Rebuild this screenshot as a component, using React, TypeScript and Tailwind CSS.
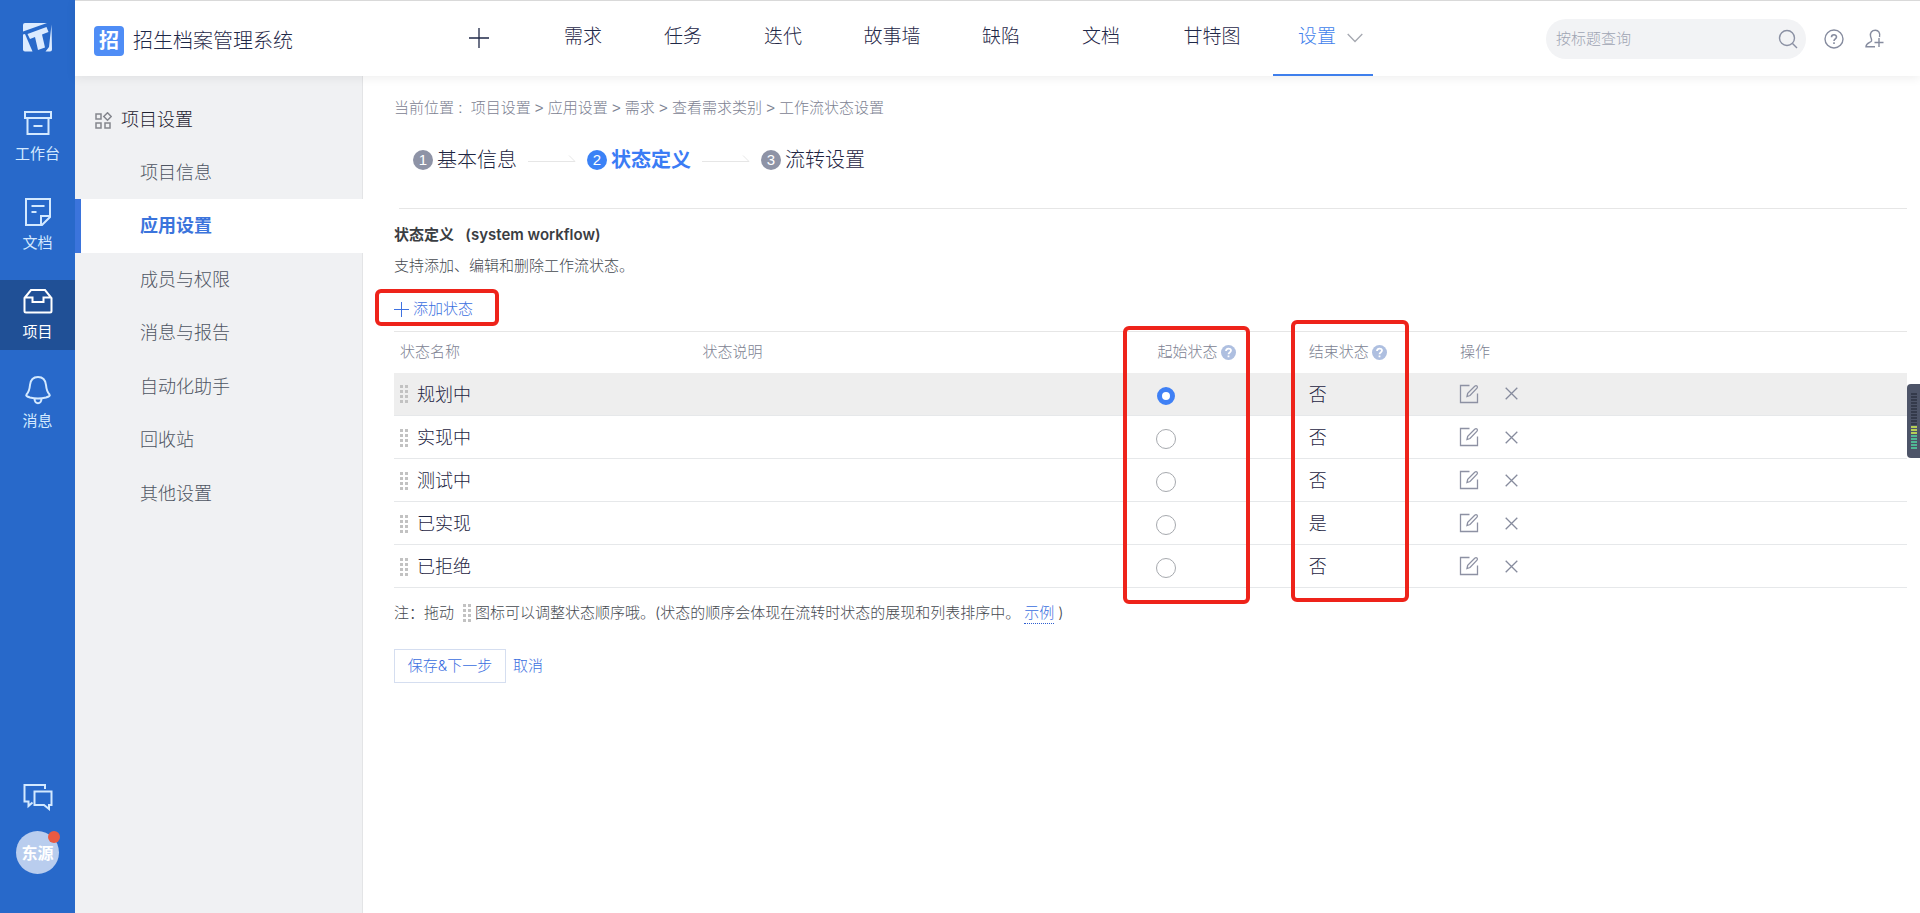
import { useState, type ReactNode } from "react";

const railStroke = {
  fill: "none",
  stroke: "currentColor",
  strokeWidth: 2,
} as const;

function LogoMark() {
  return (
    <svg width="30" height="30" viewBox="0 0 30 30" fill="#dcebff" aria-hidden="true">
      <path d="M2 0H24L0 8.500V2Q0 0 2 0Z" />
      <path d="M0 11.500L2 11L9.500 28.500H2Q0 28.500 0 26.500Z" />
      <path d="M28.500 1.500L29 26.500Q29 28.500 27 28.500H22.500L26 24Z" />
      <path d="M4.500 11L23.500 4L25.500 9L19 11.500L22 24.500L15 27L12 14L7 16Z" />
    </svg>
  );
}

function WorkbenchIcon() {
  return (
    <svg width="28" height="28" viewBox="0 0 28 28" {...railStroke} aria-hidden="true">
      <path d="M1 3H27V9H1Z M3.500 9V25H24.500V9 M9.500 17H18.500" />
    </svg>
  );
}

function DocIcon() {
  return (
    <svg width="28" height="28" viewBox="0 0 28 28" {...railStroke} aria-hidden="true">
      <path d="M2 1H26V19L18 27H2Z M26 18H17V27 M7.500 8H20.500 M7.500 14H12.500" />
    </svg>
  );
}

function ProjectIcon() {
  return (
    <svg width="30" height="28" viewBox="0 0 30 28" {...railStroke} aria-hidden="true">
      <path d="M1.500 11L8 3H22L28.500 11V24Q28.500 25.500 27 25.500H3Q1.500 25.500 1.500 24Z M1.500 10.500H9.500V15H20.500V10.500H28.500" />
    </svg>
  );
}

function BellIcon() {
  return (
    <svg width="28" height="30" viewBox="0 0 28 30" {...railStroke} aria-hidden="true">
      <path d="M14 2C9 2 6.500 5.500 6 10C5.500 15.500 4.500 17.500 2.500 19.500C1.700 20.500 2.500 21.500 6 22.500C11 23.800 17 23.800 22 22.500C25.500 21.500 26.300 20.500 25.500 19.500C23.500 17.500 22.500 15.500 22 10C21.500 5.500 19 2 14 2Z M10.500 24C11 29.500 17 29.500 17.500 24" />
    </svg>
  );
}

function ChatIcon() {
  return (
    <svg width="30" height="28" viewBox="0 0 30 28" {...railStroke} aria-hidden="true">
      <path d="M22 6V2H1.500V18.500H5.500V23L9.500 19.500 M11.500 8.500H28.500V22H26V26L21 22H11.500Z" />
    </svg>
  );
}

function GridIcon() {
  return (
    <svg width="17" height="17" viewBox="0 0 17 17" fill="none" stroke="#84868d" strokeWidth="1.500" aria-hidden="true">
      <path d="M1 2H6V7H1Z M1 11H6V16H1Z M10 11H15V16H10Z M12.500 .8L16.200 4.500L12.500 8.200L8.800 4.500Z" />
    </svg>
  );
}

function PlusIcon({ size }: { size: number }) {
  return (
    <svg width={size} height={size} viewBox="0 0 20 20" fill="none" stroke="currentColor" strokeWidth="1.300" aria-hidden="true">
      <path d="M10 0V20 M0 10H20" />
    </svg>
  );
}

function SearchIcon() {
  return (
    <svg width="20" height="20" viewBox="0 0 20 20" fill="none" stroke="#8a90a3" strokeWidth="1.400" aria-hidden="true">
      <circle cx="9" cy="9" r="7.500" />
      <path d="M14.500 14.500L19 19" />
    </svg>
  );
}

function HelpIcon() {
  return (
    <svg width="20" height="20" viewBox="0 0 20 20" fill="none" stroke="#868c9f" strokeWidth="1.400" aria-hidden="true">
      <circle cx="10" cy="10" r="9" />
      <path d="M7.500 8.200C7.500 5 12.500 5 12.500 8C12.500 9.800 10 9.800 10 12 M10 13.300V15" strokeWidth="1.600" />
    </svg>
  );
}

function AddUserIcon() {
  return (
    <svg width="19" height="20" viewBox="0 0 19 20" fill="none" stroke="#868c9f" strokeWidth="1.400" aria-hidden="true">
      <path d="M14.500 8C15.500 4 13.500 1.200 10.500 1.200C6.500 1.200 5 4 5.500 7C5.700 9 7 10 6.500 12C6 13.500 1 14 1 17.800H10 M14 9V18 M9.500 13.500H18.500" />
    </svg>
  );
}

function HintIcon() {
  return (
    <svg width="15" height="15" viewBox="0 0 15 15" aria-hidden="true">
      <circle cx="7.500" cy="7.500" r="7.500" fill="#aebfe0" />
      <path d="M5 6C5 2.800 10 2.800 10 5.600C10 7.400 7.500 7.400 7.500 9.200 M7.500 10.500V12.300" fill="none" stroke="#fff" strokeWidth="1.800" />
    </svg>
  );
}

function EditIcon() {
  return (
    <svg width="20" height="20" viewBox="0 0 20 20" fill="none" stroke="#8d91a3" strokeWidth="1.300" aria-hidden="true">
      <path d="M10.500 1.500H1.500V18.500H18.500V9.500" />
      <path d="M8 12.500L8.700 9.300L15.700 2.200C17.500 .8 19.200 2.500 18 4.200L11 11.500Z" />
    </svg>
  );
}

function CloseIcon() {
  return (
    <svg width="13" height="13" viewBox="0 0 13 13" fill="none" stroke="#868b9d" strokeWidth="1.300" aria-hidden="true">
      <path d="M.7 .7L12.300 12.300M12.300 .7L.7 12.300" />
    </svg>
  );
}

function DragDots() {
  return (
    <svg width="8" height="19" viewBox="0 0 8 19" fill="#c2c2c2" className="inline-block shrink-0" aria-hidden="true">
      <path d="M0 0H3V3H0Z M5 0H8V3H5Z M0 5H3V8H0Z M5 5H8V8H5Z M0 10H3V13H0Z M5 10H8V13H5Z M0 15H3V18H0Z M5 15H8V18H5Z" />
    </svg>
  );
}

const railItems: { label: string; icon: ReactNode; active?: boolean }[] = [
  { label: "工作台", icon: <WorkbenchIcon /> },
  { label: "文档", icon: <DocIcon /> },
  { label: "项目", icon: <ProjectIcon />, active: true },
  { label: "消息", icon: <BellIcon /> },
];

function Rail() {
  return (
    <nav className="flex w-[75px] shrink-0 flex-col items-center bg-[#2869ca] text-[#d3e9ff]">
      <a href="#home" aria-label="首页" className="mt-[23px]">
        <LogoMark />
      </a>
      <ul className="mt-[49px] flex w-full flex-col gap-[19px]">
        {railItems.map((item) => (
          <li key={item.label}>
            <a
              href="#rail"
              className={
                item.active
                  ? "flex h-[70px] flex-col items-center gap-[5px] bg-[#205096] pt-[7px] text-white"
                  : "flex h-[70px] flex-col items-center gap-[5px] pt-[7px]"
              }
            >
              <span className="flex h-7 items-center">{item.icon}</span>
              <span className="text-[15px] leading-6 font-normal">{item.label}</span>
            </a>
          </li>
        ))}
      </ul>
      <button type="button" aria-label="反馈" className="mt-auto">
        <ChatIcon />
      </button>
      <button
        type="button"
        className="relative mt-5 mb-[39px] size-[43px] rounded-full bg-[#b9cdee] text-base font-bold text-white"
      >
        <span className="whitespace-nowrap">东源</span>
        <span className="absolute top-0 -right-px size-3 rounded-full bg-[#ea5a42]" />
      </button>
    </nav>
  );
}

const navItems = [
  { label: "需求", width: "w-[100px]" },
  { label: "任务", width: "w-[100px]" },
  { label: "迭代", width: "w-[100px]" },
  { label: "故事墙", width: "w-[118px]" },
  { label: "缺陷", width: "w-[100px]" },
  { label: "文档", width: "w-[100px]" },
  { label: "甘特图", width: "w-[122px]" },
];

function Header() {
  return (
    <header className="relative z-10 flex h-[76px] border-t border-[#d9d9d9] bg-white shadow-[0_2px_10px_rgba(0,0,0,0.07)]">
      <div className="flex w-[354px] shrink-0 items-center gap-[9px] pt-[5px] pl-[19px]">
        <span className="flex size-[30px] items-center justify-center rounded bg-[#4f8df6] text-xl font-bold text-white">
          招
        </span>
        <span className="text-xl text-[#1f2848]">招生档案管理系统</span>
      </div>
      <nav className="flex text-[19px] text-[#1f2848]">
        <button type="button" aria-label="新建" className="flex w-[104px] items-center pb-[2px] pl-10">
          <PlusIcon size={20} />
        </button>
        {navItems.map((item) => (
          <a key={item.label} href="#nav" className={`flex items-center justify-center pb-[2px] ${item.width}`}>
            {item.label}
          </a>
        ))}
        <a
          href="#settings"
          className="flex w-[100px] items-center gap-[11px] border-b-2 border-[#3f7fec] pl-[25px] text-[#3f7fec]"
        >
          设置
          <svg width="16" height="10" viewBox="0 0 16 10" fill="none" stroke="#a5a8b0" strokeWidth="1.300" aria-hidden="true">
            <path d="M.7 1L8 8.500L15.300 1" />
          </svg>
        </a>
      </nav>
      <div className="ml-auto flex items-center pt-px pr-9">
        <label className="flex h-10 w-[260px] items-center rounded-full bg-[#f2f3f5] pr-2 pl-[10px]">
          <input
            type="text"
            aria-label="按标题查询"
            placeholder="按标题查询"
            className="min-w-0 flex-1 bg-transparent text-[15px] outline-none placeholder:text-[#9ea4b3]"
          />
          <SearchIcon />
        </label>
        <button type="button" aria-label="帮助" className="ml-[18px]">
          <HelpIcon />
        </button>
        <button type="button" aria-label="邀请成员" className="ml-[21px]">
          <AddUserIcon />
        </button>
      </div>
    </header>
  );
}

const menu = ["项目信息", "应用设置", "成员与权限", "消息与报告", "自动化助手", "回收站", "其他设置"];

function SideMenu() {
  return (
    <aside className="w-[288px] shrink-0 border-r border-[#e3e4e6] bg-[#f0f1f3] pt-[30px]">
      <h2 className="flex h-7 items-center gap-[9px] pl-5 text-lg text-[#1d2130]">
        <GridIcon />
        项目设置
      </h2>
      <ul className="mt-3 text-lg text-[#4e5562]">
        {menu.map((label) => (
          <li key={label} className="odd:h-[53px] even:h-[54px]">
            <a
              href="#menu"
              className={
                label === "应用设置"
                  ? "-mr-px flex h-full items-center border-l-[6px] border-[#3b74dc] bg-white pl-[59px] font-bold text-[#3b74dc]"
                  : "flex h-full items-center pl-[65px]"
              }
            >
              {label}
            </a>
          </li>
        ))}
      </ul>
    </aside>
  );
}

function Step({ index, label, active }: { index: number; label: string; active?: boolean }) {
  return (
    <li className="flex items-center gap-1">
      <span
        className={
          active
            ? "flex size-5 items-center justify-center rounded-full bg-[#3b82f6] font-['Liberation_Sans'] text-[15px] text-white"
            : "flex size-5 items-center justify-center rounded-full bg-[#8e93a6] font-['Liberation_Sans'] text-[15px] text-white"
        }
      >
        {index}
      </span>
      <span className={active ? "text-xl font-bold text-[#3b7cf5]" : "text-xl text-[#1e2542]"}>{label}</span>
    </li>
  );
}

function StepArrow() {
  return (
    <li aria-hidden="true">
      <svg width="48" height="10" viewBox="0 0 48 10" fill="none" stroke="#e6e6e6">
        <path d="M0 6.500H47L41 .5" />
      </svg>
    </li>
  );
}

const states = [
  { name: "规划中", end: "否" },
  { name: "实现中", end: "否" },
  { name: "测试中", end: "否" },
  { name: "已实现", end: "是" },
  { name: "已拒绝", end: "否" },
];

function StateTable() {
  const [start, setStart] = useState("规划中");
  return (
    <table className="w-full table-fixed border-collapse text-left text-[#1e2542]">
      <thead>
        <tr className="h-[41px] border-t border-[#e6e6e6] text-[15px] text-[#7c8292]">
          <th className="w-1/5 pl-[6px] font-light">状态名称</th>
          <th className="w-3/10 pl-[6px] font-light">状态说明</th>
          <th className="w-1/10 pl-[7px] font-light">
            <span className="flex items-center gap-[3px]">
              起始状态
              <HintIcon />
            </span>
          </th>
          <th className="w-1/10 pl-[7px] font-light">
            <span className="flex items-center gap-[3px]">
              结束状态
              <HintIcon />
            </span>
          </th>
          <th className="w-3/10 pl-[7px] font-light">操作</th>
        </tr>
      </thead>
      <tbody>
        {states.map((state) => (
          <tr key={state.name} className="h-[43px] border-b border-[#e6e8ea] text-lg first:bg-[#eeeeee]">
            <td className="pt-[2px] pl-[6px]">
              <span className="flex items-center gap-[9px]">
                <DragDots />
                {state.name}
              </span>
            </td>
            <td />
            <td className="pl-[6px]">
              <input
                type="radio"
                name="start-state"
                aria-label={state.name}
                checked={start === state.name}
                onChange={() => setStart(state.name)}
                className="mt-1 block size-5 appearance-none rounded-full border border-[#a6a9ae] bg-white checked:mx-px checked:size-[18px] checked:border-[5px] checked:border-[#3f80f5]"
              />
            </td>
            <td className="pt-[2px] pl-[7px]">{state.end}</td>
            <td className="pl-[6px]">
              <span className="flex items-center gap-[26px]">
                <button type="button" aria-label="编辑">
                  <EditIcon />
                </button>
                <button type="button" aria-label="删除">
                  <CloseIcon />
                </button>
              </span>
            </td>
          </tr>
        ))}
      </tbody>
    </table>
  );
}

const crumbs = ["项目设置", "应用设置", "需求", "查看需求类别", "工作流状态设置"];

function Main() {
  return (
    <main className="min-w-0 flex-1 pt-5 pr-[13px] pl-[31px] text-[15px] text-[#45494f]">
      <p className="font-['Liberation_Sans','Noto_Sans_CJK_SC',sans-serif] leading-6 text-[#7c8292]">
        当前位置 : &nbsp;{crumbs.join(" > ")}
      </p>
      <ol className="mt-6 ml-[19px] flex h-8 items-center gap-[11px]">
        <Step index={1} label="基本信息" />
        <StepArrow />
        <Step index={2} label="状态定义" active />
        <StepArrow />
        <Step index={3} label="流转设置" />
      </ol>
      <hr className="mt-8 ml-[5px] border-[#e6e6e6]" />
      <h1 className="mt-[14px] leading-6 font-semibold text-[#3a3d42]">状态定义 &nbsp; (system workflow)</h1>
      <p className="mt-[7px] leading-6">支持添加、编辑和删除工作流状态。</p>
      <div className="relative mt-[19px] flex">
        <button type="button" className="flex h-6 items-center gap-1 text-[#3a6ee0]">
          <PlusIcon size={15} />
          添加状态
        </button>
        <span className="pointer-events-none absolute -top-2 -left-[19px] h-[37px] w-[124px] rounded-md border-4 border-[#ee231a]" />
      </div>
      <div className="relative mt-[10px]">
        <StateTable />
        <span className="pointer-events-none absolute -top-[5px] left-[48.200%] h-[278px] w-[127px] rounded-md border-4 border-[#ee231a]" />
        <span className="pointer-events-none absolute -top-[11px] left-[59.300%] h-[282px] w-[118px] rounded-md border-4 border-[#ee231a]" />
      </div>
      <p className="mt-[13px] flex h-6 items-center">
        注：拖动
        <span className="mr-1 ml-[9px] flex">
          <DragDots />
        </span>
        图标可以调整状态顺序哦。(状态的顺序会体现在流转时状态的展现和列表排序中。
        <a href="#example" className="ml-1 border-b border-dotted border-[#2f5fd0] leading-5 text-[#3a6ee0]">
          示例
        </a>
        <span className="ml-1">)</span>
      </p>
      <div className="mt-6 flex items-center gap-[7px] text-[#3a6ee0]">
        <button type="button" className="h-[34px] w-28 border border-[#d5def0] bg-white">
          保存&下一步
        </button>
        <a href="#cancel">取消</a>
      </div>
    </main>
  );
}

function SideGauge() {
  return (
    <div className="fixed top-[384px] right-0 z-20 flex h-[74px] w-[13px] flex-col items-center justify-center gap-px rounded-l bg-[#4d5468]">
      {Array.from({ length: 19 }, (_, i) => (
        <span
          key={i}
          className={
            i < 11 ? "h-[2px] w-[6px] bg-[#343a4b]" : i < 14 ? "h-[2px] w-[6px] bg-[#b5cf57]" : "h-[2px] w-[6px] bg-[#4fb894]"
          }
        />
      ))}
    </div>
  );
}

export default function App() {
  return (
    <div className="flex min-h-screen bg-white font-['Inter','Noto_Sans_CJK_SC',sans-serif] font-light">
      <Rail />
      <div className="flex min-w-0 flex-1 flex-col">
        <Header />
        <div className="flex flex-1">
          <SideMenu />
          <Main />
        </div>
      </div>
      <SideGauge />
    </div>
  );
}
